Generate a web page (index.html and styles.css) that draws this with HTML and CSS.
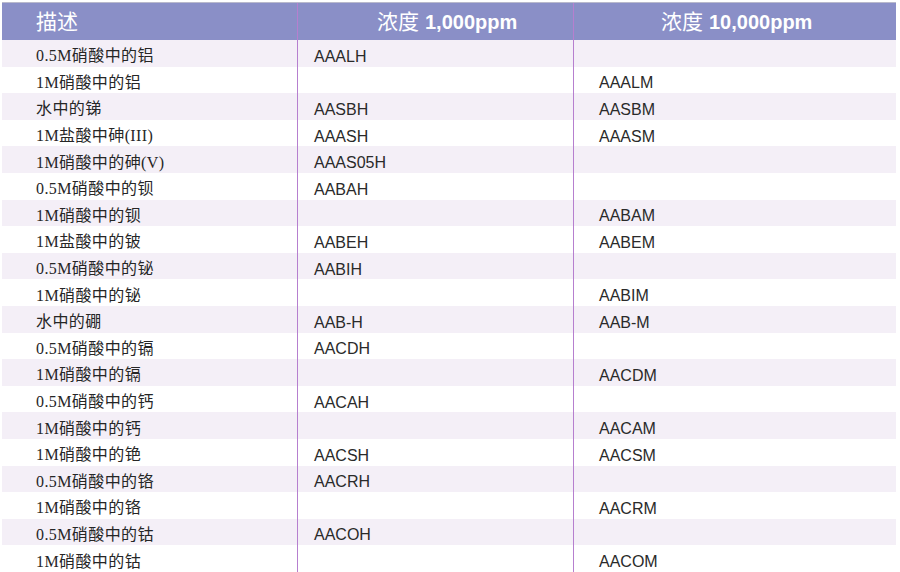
FILE: index.html
```html
<!DOCTYPE html>
<html lang="zh">
<head>
<meta charset="utf-8">
<link rel="stylesheet" href="styles.css">
</head>
<body>
<div class="table">
  <div class="row head">
    <div class="cell c1">描述</div>
    <div class="cell c2"><span>浓度<b>1,000ppm</b></span></div>
    <div class="cell c3"><span>浓度<b>10,000ppm</b></span></div>
  </div>
  <div class="row"><div class="cell c1">0.5M硝酸中的铝</div><div class="cell c2">AAALH</div><div class="cell c3"></div></div>
  <div class="row"><div class="cell c1">1M硝酸中的铝</div><div class="cell c2"></div><div class="cell c3">AAALM</div></div>
  <div class="row"><div class="cell c1">水中的锑</div><div class="cell c2">AASBH</div><div class="cell c3">AASBM</div></div>
  <div class="row"><div class="cell c1">1M盐酸中砷(III)</div><div class="cell c2">AAASH</div><div class="cell c3">AAASM</div></div>
  <div class="row"><div class="cell c1">1M硝酸中的砷(V)</div><div class="cell c2">AAAS05H</div><div class="cell c3"></div></div>
  <div class="row"><div class="cell c1">0.5M硝酸中的钡</div><div class="cell c2">AABAH</div><div class="cell c3"></div></div>
  <div class="row"><div class="cell c1">1M硝酸中的钡</div><div class="cell c2"></div><div class="cell c3">AABAM</div></div>
  <div class="row"><div class="cell c1">1M盐酸中的铍</div><div class="cell c2">AABEH</div><div class="cell c3">AABEM</div></div>
  <div class="row"><div class="cell c1">0.5M硝酸中的铋</div><div class="cell c2">AABIH</div><div class="cell c3"></div></div>
  <div class="row"><div class="cell c1">1M硝酸中的铋</div><div class="cell c2"></div><div class="cell c3">AABIM</div></div>
  <div class="row"><div class="cell c1">水中的硼</div><div class="cell c2">AAB-H</div><div class="cell c3">AAB-M</div></div>
  <div class="row"><div class="cell c1">0.5M硝酸中的镉</div><div class="cell c2">AACDH</div><div class="cell c3"></div></div>
  <div class="row"><div class="cell c1">1M硝酸中的镉</div><div class="cell c2"></div><div class="cell c3">AACDM</div></div>
  <div class="row"><div class="cell c1">0.5M硝酸中的钙</div><div class="cell c2">AACAH</div><div class="cell c3"></div></div>
  <div class="row"><div class="cell c1">1M硝酸中的钙</div><div class="cell c2"></div><div class="cell c3">AACAM</div></div>
  <div class="row"><div class="cell c1">1M硝酸中的铯</div><div class="cell c2">AACSH</div><div class="cell c3">AACSM</div></div>
  <div class="row"><div class="cell c1">0.5M硝酸中的铬</div><div class="cell c2">AACRH</div><div class="cell c3"></div></div>
  <div class="row"><div class="cell c1">1M硝酸中的铬</div><div class="cell c2"></div><div class="cell c3">AACRM</div></div>
  <div class="row"><div class="cell c1">0.5M硝酸中的钴</div><div class="cell c2">AACOH</div><div class="cell c3"></div></div>
  <div class="row"><div class="cell c1">1M硝酸中的钴</div><div class="cell c2"></div><div class="cell c3">AACOM</div></div>
</div>
</body>
</html>
```

FILE: styles.css
```css
html, body {
  margin: 0;
  padding: 0;
  background: #ffffff;
  overflow: hidden;
}
.table {
  margin: 2px 0 0 2px;
  width: 894px;
  border-top: 1px solid #b9b9cc;
}
.row {
  display: grid;
  grid-template-columns: 295px 276px 1fr;
  height: 26.6px;
}
.row:nth-child(even) {
  background: #f4eff7;
}
.row.head {
  height: 37px;
  background: #8a8fc7;
  color: #ffffff;
}
.cell {
  display: flex;
  align-items: center;
  min-width: 0;
  white-space: nowrap;
}
.c2, .c3 {
  border-left: 1px solid #b67fcf;
  font-family: "Liberation Sans", Arial, sans-serif;
  font-size: 16px;
  color: #2a2a2a;
  padding-top: 7px;
}
.c1 {
  padding-left: 34px;
  padding-top: 2px;
  font-family: "Liberation Serif", "Noto Sans CJK SC", serif;
  font-size: 16px;
  letter-spacing: 0.4px;
  color: #262626;
}
.c2 { padding-left: 16px; }
.c3 { padding-left: 25px; }
.head .cell {
  color: #ffffff;
  font-family: "Noto Sans CJK SC", sans-serif;
  font-size: 21px;
  font-weight: 400;
  letter-spacing: 0;
  padding-top: 0;
  padding-bottom: 4px;
}
.head .c1 {
  font-size: 21px;
  font-weight: 400;
}
.head .c2 { padding-left: 79px; }
.head .c3 { padding-left: 87px; }
.head b {
  font-family: "Liberation Sans", Arial, sans-serif;
  font-weight: 700;
  font-size: 20px;
  margin-left: 6px;
}
```
